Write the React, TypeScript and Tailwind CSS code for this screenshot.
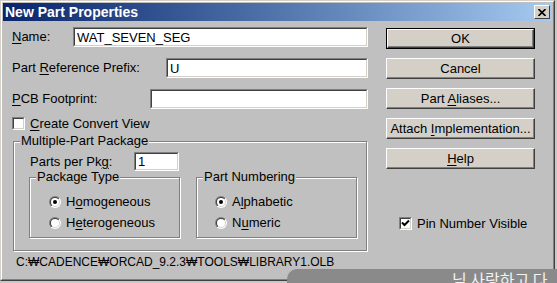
import React from "react";

const Mn = ({ children }: { children: React.ReactNode }) => (
    <span className="underline underline-offset-[2px] decoration-1">{children}</span>
);

const Field = ({ value, w, h = 20 }: { value?: string; w: number; h?: number }) => (
    <div
        className="border border-t-[#808080] border-l-[#808080] border-r-white border-b-white"
        style={{ width: w, height: h }}
    >
        <div className="h-full border border-t-[#404040] border-l-[#404040] border-r-[#d4d0c8] border-b-[#d4d0c8] bg-white flex items-center px-[2px] leading-none">
            {value}
        </div>
    </div>
);

const Button = ({ children, isDefault = false }: { children: React.ReactNode; isDefault?: boolean }) => (
    <div className={isDefault ? "border border-black" : ""}>
        <div
            className={`${isDefault ? "h-[19px]" : "h-[21px]"} bg-[#d4d0c8] border border-t-white border-l-white border-r-[#404040] border-b-[#404040] shadow-[inset_-1px_-1px_0_#808080] flex items-center justify-center leading-none`}
        >
            <span>{children}</span>
        </div>
    </div>
);

const Radio = ({ checked }: { checked?: boolean }) => (
    <svg width="12" height="12" viewBox="0 0 12 12" className="shrink-0">
        <defs>
            <linearGradient id="ro" x1="0" y1="0" x2="1" y2="1">
                <stop offset="0.5" stopColor="#808080" />
                <stop offset="0.5" stopColor="#ffffff" />
            </linearGradient>
            <linearGradient id="ri" x1="0" y1="0" x2="1" y2="1">
                <stop offset="0.5" stopColor="#404040" />
                <stop offset="0.5" stopColor="#d4d0c8" />
            </linearGradient>
        </defs>
        <circle cx="6" cy="6" r="6" fill="url(#ro)" />
        <circle cx="6" cy="6" r="5" fill="url(#ri)" />
        <circle cx="6" cy="6" r="4" fill="#ffffff" />
        {checked && <circle cx="6" cy="6" r="2" fill="#000000" />}
    </svg>
);

const Check = ({ checked }: { checked?: boolean }) => (
    <div className="w-[13px] h-[13px] shrink-0 border border-t-[#808080] border-l-[#808080] border-r-white border-b-white">
        <div className="w-full h-full border border-t-[#404040] border-l-[#404040] border-r-[#d4d0c8] border-b-[#d4d0c8] bg-white">
            {checked && (
                <svg width="9" height="9" viewBox="0 0 9 9">
                    <path d="M1 3.5 L3.5 6 L8 1.5" stroke="#000" strokeWidth="2" fill="none" />
                </svg>
            )}
        </div>
    </div>
);

const Group = ({
    title,
    className,
    children,
}: {
    title: string;
    className: string;
    children: React.ReactNode;
}) => (
    <div
        className={`relative border border-[#808080] shadow-[1px_1px_0_#fff,inset_1px_1px_0_#fff] ${className}`}
    >
        <span className="absolute -top-[9px] left-[6px] bg-[#c0c0c0] px-[1px] leading-[16px]">
            {title}
        </span>
        {children}
    </div>
);

const RadioRow = ({ checked, children }: { checked?: boolean; children: React.ReactNode }) => (
    <div className="flex items-center gap-[5px] h-[13px]">
        <Radio checked={checked} />
        <span className="leading-none">{children}</span>
    </div>
);

export default function App() {
    return (
        <div className="relative w-[557px] h-[283px] overflow-hidden bg-[#c8c8c8] text-[13px] text-black font-['Liberation_Sans',Arial,sans-serif]">
            <div className="w-[555px] h-[281px] border border-t-[#d4d0c8] border-l-[#d4d0c8] border-r-[#404040] border-b-[#404040]">
                <div className="h-full border border-t-white border-l-white border-r-[#808080] border-b-[#808080] bg-[#c0c0c0] p-px">
                    {/* title bar */}
                    <div className="h-[18px] bg-linear-to-r from-[#0a246a] to-[#a6caf0] flex items-center justify-between pl-[2px] pr-[2px]">
                        <span className="text-white font-bold text-[14px] leading-none">New Part Properties</span>
                        <div className="w-[16px] h-[14px] bg-[#d4d0c8] border border-t-white border-l-white border-r-[#404040] border-b-[#404040] flex items-center justify-center">
                            <svg width="8" height="7" viewBox="0 0 8 7">
                                <path d="M0.5 0 L7.5 7 M7.5 0 L0.5 7" stroke="#000" strokeWidth="1.6" />
                            </svg>
                        </div>
                    </div>

                    {/* body */}
                    <div className="flex pl-[9px]">
                        <div className="w-[364px] flex flex-col">
                            <div className="mt-[6px] flex items-center h-[20px]">
                                <span className="w-[61px]">
                                    <Mn>N</Mn>ame:
                                </span>
                                <Field value="WAT_SEVEN_SEG" w={295} />
                            </div>
                            <div className="mt-[11px] flex items-center h-[20px]">
                                <span className="w-[154px]">
                                    Part <Mn>R</Mn>eference Prefix:
                                </span>
                                <Field value="U" w={202} />
                            </div>
                            <div className="mt-[11px] flex items-center h-[20px]">
                                <span className="w-[138px]">
                                    <Mn>P</Mn>CB Footprint:
                                </span>
                                <Field w={218} />
                            </div>
                            <div className="mt-[8px] flex items-center gap-[5px] h-[13px]">
                                <Check />
                                <span className="leading-none">
                                    <Mn>C</Mn>reate Convert View
                                </span>
                            </div>

                            <Group title="Multiple-Part Package" className="mt-[11px] ml-px w-[354px] h-[110px]">
                                <div className="mt-[10px] ml-[16px] flex items-center h-[19px]">
                                    <span className="w-[104px]">
                                        Parts per Pk<Mn>g</Mn>:
                                    </span>
                                    <Field value="1" w={45} h={19} />
                                </div>
                                <div className="mt-[6px] ml-[15px] flex gap-[16px]">
                                    <Group title="Package Type" className="w-[151px] h-[61px]">
                                        <div className="mt-[17px] ml-[19px] flex flex-col gap-[8px]">
                                            <RadioRow checked>
                                                H<Mn>o</Mn>mogeneous
                                            </RadioRow>
                                            <RadioRow>
                                                H<Mn>e</Mn>terogeneous
                                            </RadioRow>
                                        </div>
                                    </Group>
                                    <Group title="Part Numbering" className="w-[161px] h-[61px]">
                                        <div className="mt-[17px] ml-[18px] flex flex-col gap-[8px]">
                                            <RadioRow checked>
                                                A<Mn>l</Mn>phabetic
                                            </RadioRow>
                                            <RadioRow>
                                                N<Mn>u</Mn>meric
                                            </RadioRow>
                                        </div>
                                    </Group>
                                </div>
                            </Group>

                            <div className="mt-[4px] ml-[4px] leading-[15px] text-[12px]">
                                C:₩CADENCE₩ORCAD_9.2.3₩TOOLS₩LIBRARY1.OLB
                            </div>
                        </div>

                        <div className="ml-[10px] w-[149px] pt-[7px] flex flex-col gap-[9px]">
                            <Button isDefault>OK</Button>
                            <Button>Cancel</Button>
                            <Button>
                                Part <Mn>A</Mn>liases...
                            </Button>
                            <Button>
                                Attach <Mn>I</Mn>mplementation...
                            </Button>
                            <Button>
                                <Mn>H</Mn>elp
                            </Button>
                            <div className="mt-[39px] ml-[13px] flex items-center gap-[5px] h-[13px]">
                                <Check checked />
                                <span className="leading-none">Pin Number Visible</span>
                            </div>
                        </div>
                    </div>
                </div>
            </div>

            {/* caption window overlapping the bottom right */}
            <div className="absolute left-[287px] top-[269px] right-0 bottom-0 bg-[#8a8a8a] rounded-tl-[10px] overflow-hidden">
                <span className="absolute left-[165px] top-[2px] text-[16px] leading-none text-[#f2f2f2] font-['Noto_Sans_CJK_KR',sans-serif] whitespace-nowrap">
                    님 사랑하고 다
                </span>
            </div>
        </div>
    );
}
